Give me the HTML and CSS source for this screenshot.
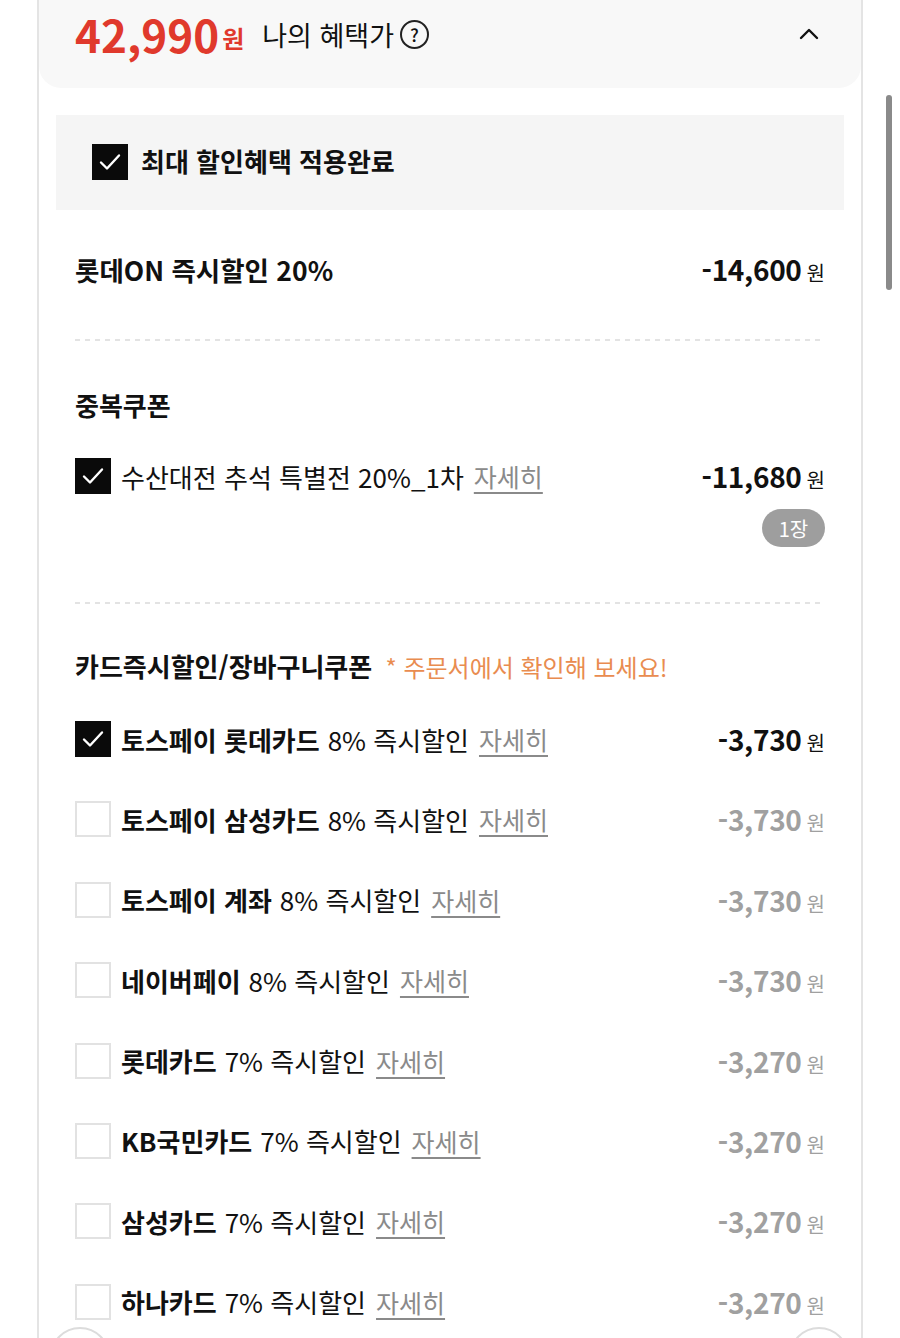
FILE: index.html
```html
<!DOCTYPE html>
<html lang="ko">
<head>
<meta charset="utf-8">
<title>나의 혜택가</title>
<link rel="stylesheet" href="styles.css">
</head>
<body>
<div class="panel">
  <div class="header">
    <span class="price">42,990</span><span class="price-unit">원</span>
    <span class="my-price">나의 혜택가</span>
    <span class="qmark">?</span>
    <svg class="chevron" width="20" height="12" viewBox="0 0 20 12"><polyline points="2,10 10,2 18,10" fill="none" stroke="#111" stroke-width="2.4" stroke-linecap="round" stroke-linejoin="round"/></svg>
  </div>

  <div class="max-box">
    <span class="cb checked"><svg width="36" height="36" viewBox="0 0 36 36"><polyline points="9,18.5 15,24.5 27,11.5" fill="none" stroke="#fff" stroke-width="2.4" stroke-linecap="round" stroke-linejoin="round"/></svg></span>
    <span class="max-text">최대 할인혜택 적용완료</span>
  </div>

  <div class="content">
    <section class="sec sec-first">
      <div class="row">
        <span class="row-title">롯데ON 즉시할인 20%</span>
        <span class="amt"><b>-14,600</b><i>원</i></span>
      </div>
    </section>

    <section class="sec sec-coupon">
      <h3 class="sec-title">중복쿠폰</h3>
      <div class="row coupon-row">
        <span class="label"><span class="cb checked"><svg width="36" height="36" viewBox="0 0 36 36"><polyline points="9,18.5 15,24.5 27,11.5" fill="none" stroke="#fff" stroke-width="2.4" stroke-linecap="round" stroke-linejoin="round"/></svg></span><span class="coupon-name">수산대전 추석 특별전 20%_1차</span><span class="more">자세히</span></span>
        <span class="amt"><b>-11,680</b><i>원</i></span>
      </div>
      <div class="badge-row"><span class="badge">1장</span></div>
    </section>

    <section class="sec sec-card">
      <h3 class="sec-title">카드즉시할인/장바구니쿠폰 <span class="note">* 주문서에서 확인해 보세요!</span></h3>
      <div class="card-list">
        <div class="row card-row">
          <span class="label"><span class="cb checked"><svg width="36" height="36" viewBox="0 0 36 36"><polyline points="9,18.5 15,24.5 27,11.5" fill="none" stroke="#fff" stroke-width="2.4" stroke-linecap="round" stroke-linejoin="round"/></svg></span><b>토스페이 롯데카드</b><span class="reg">8% 즉시할인</span><span class="more">자세히</span></span>
          <span class="amt"><b>-3,730</b><i>원</i></span>
        </div>
        <div class="row card-row off">
          <span class="label"><span class="cb"></span><b>토스페이 삼성카드</b><span class="reg">8% 즉시할인</span><span class="more">자세히</span></span>
          <span class="amt"><b>-3,730</b><i>원</i></span>
        </div>
        <div class="row card-row off">
          <span class="label"><span class="cb"></span><b>토스페이 계좌</b><span class="reg">8% 즉시할인</span><span class="more">자세히</span></span>
          <span class="amt"><b>-3,730</b><i>원</i></span>
        </div>
        <div class="row card-row off">
          <span class="label"><span class="cb"></span><b>네이버페이</b><span class="reg">8% 즉시할인</span><span class="more">자세히</span></span>
          <span class="amt"><b>-3,730</b><i>원</i></span>
        </div>
        <div class="row card-row off">
          <span class="label"><span class="cb"></span><b>롯데카드</b><span class="reg">7% 즉시할인</span><span class="more">자세히</span></span>
          <span class="amt"><b>-3,270</b><i>원</i></span>
        </div>
        <div class="row card-row off">
          <span class="label"><span class="cb"></span><b>KB국민카드</b><span class="reg">7% 즉시할인</span><span class="more">자세히</span></span>
          <span class="amt"><b>-3,270</b><i>원</i></span>
        </div>
        <div class="row card-row off">
          <span class="label"><span class="cb"></span><b>삼성카드</b><span class="reg">7% 즉시할인</span><span class="more">자세히</span></span>
          <span class="amt"><b>-3,270</b><i>원</i></span>
        </div>
        <div class="row card-row off">
          <span class="label"><span class="cb"></span><b>하나카드</b><span class="reg">7% 즉시할인</span><span class="more">자세히</span></span>
          <span class="amt"><b>-3,270</b><i>원</i></span>
        </div>
      </div>
    </section>
  </div>
</div>
<span class="float-btn float-left"></span>
<span class="float-btn float-right"></span>
<span class="scrollbar"></span>
</body>
</html>
```

FILE: styles.css
```css
* { box-sizing: border-box; }
html, body { margin: 0; padding: 0; }
body {
  width: 900px;
  height: 1338px;
  overflow: hidden;
  background: #fff;
  font-family: "Noto Sans CJK KR", "Noto Sans", sans-serif;
  color: #111;
  position: relative;
}
.panel {
  margin-left: 37px;
  width: 826px;
  min-height: 1338px;
  border-left: 2px solid #e4e4e4;
  border-right: 2px solid #e4e4e4;
}
.header {
  height: 88px;
  background: #f8f8f8;
  border-radius: 0 0 22px 22px;
  display: flex;
  align-items: center;
  padding: 0 42px 20px 36px;
}
.price {
  font-size: 44px;
  font-weight: 700;
  color: #e0392c;
  line-height: 1;
}
.price-unit {
  font-size: 24px;
  font-weight: 700;
  color: #e0392c;
  margin-left: 3px;
  margin-top: 6px;
}
.my-price {
  font-size: 27px;
  margin-left: 18px;
}
.qmark {
  width: 29px;
  height: 29px;
  border: 2px solid #222;
  border-radius: 50%;
  display: inline-flex;
  align-items: center;
  justify-content: center;
  font-size: 18px;
  font-weight: 500;
  margin-left: 6px;
  line-height: 1;
}
.chevron { margin-left: auto; margin-top: 0; }

.max-box {
  margin: 27px 17px 0;
  height: 95px;
  background: #f5f5f5;
  display: flex;
  align-items: center;
  padding-left: 36px;
  padding-bottom: 2px;
}
.cb {
  width: 36px;
  height: 36px;
  flex: none;
  display: inline-block;
  background: #fff;
  border: 2px solid #e2e2e2;
}
.cb.checked {
  background: #0a0a0a;
  border: none;
}
.cb svg { display: block; }
.max-text {
  font-size: 26px;
  font-weight: 700;
  margin-left: 13px;
  margin-top: -3px;
}

.content { padding: 0 36px; }
.sec { position: relative; }
.sec + .sec::before {
  content: "";
  display: block;
  height: 2px;
  background: repeating-linear-gradient(to right, #e3e3e3 0 5px, transparent 5px 10px);
}
.sec-first { padding: 41px 0 52px; }
.row {
  display: flex;
  align-items: center;
  justify-content: space-between;
  height: 36px;
}
.row-title {
  font-size: 26.5px;
  font-weight: 700;
}
.amt { display: flex; align-items: baseline; white-space: nowrap; }
.amt b {
  font-size: 28px;
  font-weight: 700;
  letter-spacing: -0.3px;
}
.amt i {
  font-style: normal;
  font-size: 20px;
  margin-left: 5px;
}
.sec-title {
  margin: 0;
  font-size: 26px;
  font-weight: 700;
  line-height: 36px;
}
.sec-coupon::before { margin-bottom: 46px; }
.coupon-row { margin-top: 35px; }
.label { display: flex; align-items: center; white-space: nowrap; }
.coupon-name {
  font-size: 26px;
  margin-left: 10px;
}
.more {
  font-size: 25px;
  color: #8a8a8a;
  text-decoration: underline;
  text-underline-offset: 5px;
  text-decoration-thickness: 1.5px;
  margin-left: 10px;
}
.badge-row {
  display: flex;
  justify-content: flex-end;
  margin-top: 15px;
  padding-bottom: 55px;
}
.badge {
  width: 63px;
  height: 38px;
  border-radius: 19px;
  background: #9e9e9e;
  color: #fff;
  font-size: 20px;
  display: inline-flex;
  align-items: center;
  justify-content: center;
}
.sec-card::before { margin-bottom: 44px; }
.note {
  font-weight: 400;
  color: #e98c50;
  font-size: 24px;
  margin-left: 6px;
}
.card-list {
  display: flex;
  flex-direction: column;
  gap: 44.4px;
  margin-top: 36px;
}
.card-row .label b {
  font-size: 26px;
  font-weight: 700;
  margin-left: 10px;
}
.card-row .reg {
  font-size: 26px;
  margin-left: 8px;
}
.card-row .more { margin-left: 10px; }
.card-row.off .amt { color: #a0a0a0; }

.float-btn {
  position: absolute;
  top: 1327px;
  width: 60px;
  height: 60px;
  border-radius: 50%;
  border: 2px solid #dcdcdc;
  background: #fff;
}
.float-left { left: 50px; }
.float-right { left: 789px; }
.scrollbar {
  position: absolute;
  left: 886px;
  top: 95px;
  width: 6px;
  height: 195px;
  border-radius: 3px;
  background: #8a8a8a;
}
```
